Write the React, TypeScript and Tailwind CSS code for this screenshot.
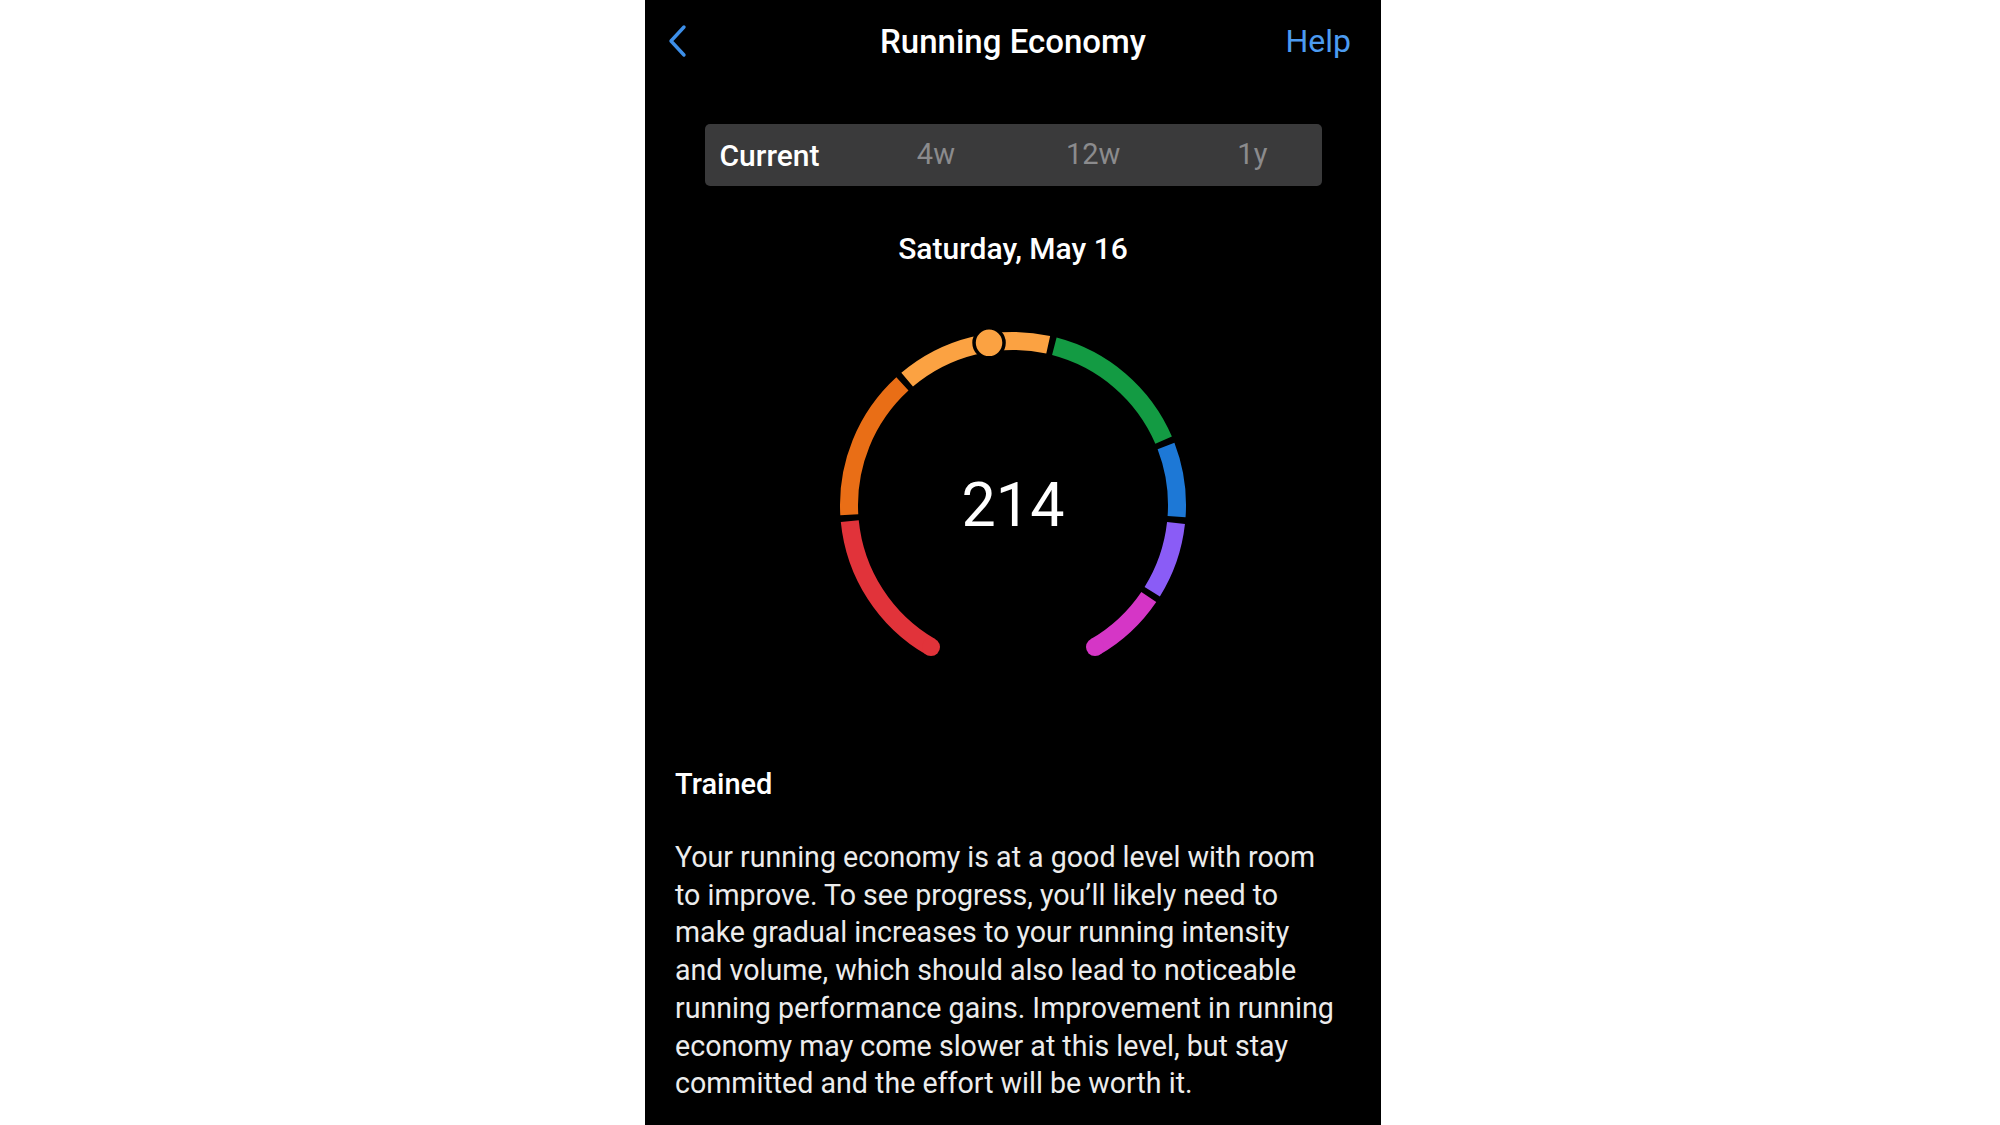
import React from 'react';

const CX = 190;
const CY = 190;
const R = 164;

// angle in degrees, measured clockwise from 12 o'clock
const pt = (deg: number) => {
  const a = (deg * Math.PI) / 180;
  return [CX + R * Math.sin(a), CY - R * Math.cos(a)];
};

const arc = (from: number, to: number) => {
  const [x1, y1] = pt(from);
  const [x2, y2] = pt(to);
  const large = to - from > 180 ? 1 : 0;
  return `M ${x1} ${y1} A ${R} ${R} 0 ${large} 1 ${x2} ${y2}`;
};

const GAP = 1.1;

const segments = [
  { from: -150, to: -94.5 - GAP, color: '#e1333a' },
  { from: -94.5 + GAP, to: -41.3 - GAP, color: '#e96e16' },
  { from: -41.3 + GAP, to: 13.5 - GAP, color: '#fba242' },
  { from: 13.5 + GAP, to: 67.8 - GAP, color: '#139b43' },
  { from: 67.8 + GAP, to: 95.2 - GAP, color: '#1d78d6' },
  { from: 95.2 + GAP, to: 123 - GAP, color: '#8a5cf6' },
  { from: 123 + GAP, to: 150, color: '#d536c6' },
];

const description = [
  'Your running economy is at a good level with room',
  'to improve. To see progress, you’ll likely need to',
  'make gradual increases to your running intensity',
  'and volume, which should also lead to noticeable',
  'running performance gains. Improvement in running',
  'economy may come slower at this level, but stay',
  'committed and the effort will be worth it.',
];

const Gauge: React.FC<{ value: number; marker: number }> = ({ value, marker }) => {
  const [sx, sy] = pt(-150);
  const [ex, ey] = pt(150);
  const [mx, my] = pt(marker);
  return (
    <div className="relative w-[380px] h-[360px]">
      <svg width="380" height="360" viewBox="0 0 380 360">
        {segments.map((s) => (
          <path key={s.from} d={arc(s.from, s.to)} stroke={s.color} strokeWidth="18" fill="none" />
        ))}
        {/* rounded ends */}
        <circle cx={sx} cy={sy} r="9" fill="#e1333a" />
        <circle cx={ex} cy={ey} r="9" fill="#d536c6" />
        {/* current value marker */}
        <circle cx={mx} cy={my} r="15" fill="#fba242" stroke="#000" strokeWidth="3.5" />
      </svg>
      <div className="absolute left-0 top-0 w-[380px] h-[380px] flex items-center justify-center">
        <span className="text-[61px] leading-none text-white font-normal">{value}</span>
      </div>
    </div>
  );
};

const App: React.FC = () => {
  return (
    <div
      className="w-full h-screen bg-white flex pl-[645px]"
      style={{ fontFamily: 'Roboto, "Noto Sans", sans-serif' }}
    >
      <div className="w-[736px] h-full bg-black flex flex-col overflow-hidden">
        {/* Header */}
        <div className="h-[82px] grid grid-cols-[1fr_auto_1fr] items-center px-[24px]">
          <div className="flex items-center">
            <svg width="22" height="34" viewBox="0 0 22 34" className="-ml-[2px]">
              <path d="M17 3 L4 17 L17 31" stroke="#3d8fe9" strokeWidth="3.4" fill="none" strokeLinecap="round" strokeLinejoin="round" />
            </svg>
          </div>
          <h1 className="text-[33px] font-medium text-white leading-none">Running Economy</h1>
          <div className="flex justify-end pr-[6px]">
            <button className="text-[32px] text-[#4c9bf0] leading-none">Help</button>
          </div>
        </div>

        {/* Period tabs */}
        <div className="mt-[42px] mx-auto w-[617px] h-[62px] rounded-[5px] bg-[#3a3a3b] grid grid-cols-4 items-center">
          <span className="pl-[15px] text-[30px] font-medium text-white">Current</span>
          <span className="text-center text-[29px] text-[#8b8b8d]">4w</span>
          <span className="text-center pl-[6px] text-[29px] text-[#8b8b8d]">12w</span>
          <span className="text-center pl-[16px] text-[29px] text-[#8b8b8d]">1y</span>
        </div>

        <div className="mt-[45px] text-center text-[30px] leading-[36px] font-medium text-white">
          Saturday, May 16
        </div>

        <div className="mt-[48px] flex justify-center">
          <Gauge value={214} marker={-8.4} />
        </div>

        {/* Description */}
        <div className="pl-[30px] pr-[20px]">
          <h2 className="mt-[91px] text-[29px] leading-[36px] font-medium text-white">Trained</h2>
          <p className="mt-[37px] whitespace-nowrap text-[28.6px] leading-[37.7px] text-[#ececec]">
            {description.map((line, i) => (
              <React.Fragment key={i}>
                {line}
                {i < description.length - 1 && <br />}
              </React.Fragment>
            ))}
          </p>
        </div>
      </div>
    </div>
  );
};

export default App;
